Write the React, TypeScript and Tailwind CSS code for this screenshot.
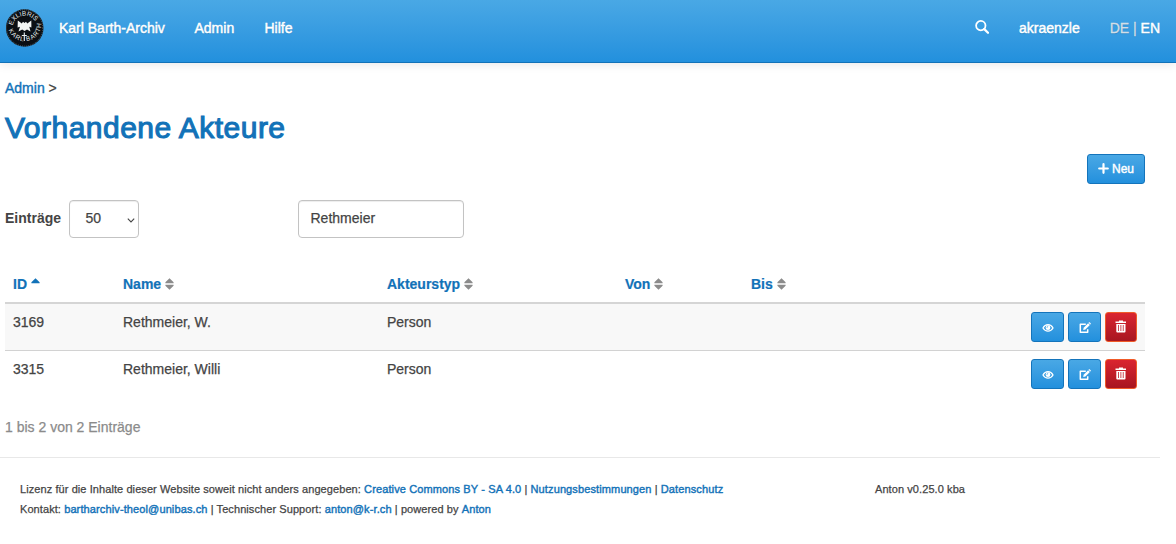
import React from "react";

const blueButton =
  "flex h-[30px] items-center justify-center rounded-[3px] border border-[#1474bb] bg-linear-to-b from-[#49a8e5] to-[#2290dd] text-white";

function Logo() {
  return (
    <svg width="38" height="39" viewBox="0 0 38 39" className="block" aria-label="Ex Libris Karl Barth">
      <circle cx="18.7" cy="19" r="18.8" fill="#0b0f14" />
      <circle cx="18.7" cy="19" r="18.1" fill="none" stroke="#8fa3ae" strokeWidth="0.5" strokeDasharray="1 1" />
      <defs>
        <path id="topArc" d="M6.600 16.900 A12.300 12.300 0 0 1 30.300 14.800" />
        <path id="bottomArc" d="M1.900 18 A16.800 16.800 0 0 0 35.300 16" />
      </defs>
      <g fill="#e8eef0" fontFamily="Liberation Sans, sans-serif">
        <text fontSize="6.4">
          <textPath href="#topArc" startOffset="0.5" textLength="29">EXLIBRIS</textPath>
        </text>
        <text fontSize="6.4">
          <textPath href="#bottomArc" startOffset="3" textLength="48">KARL BARTH</textPath>
        </text>
      </g>
      <path
        d="M11.800 11.500 L15.800 14.500 L17 12.700 L18.500 14 L20 12.700 L21.3 14.500 L25.300 11.500 L25.400 18.500 L23.3 17.8 L24.500 22.500 L21 20.500 L18.6 22 L16.2 20.500 L12.500 22.500 L14 17.8 L11.6 18.500 Z"
        fill="#f2f5f5"
      />
      <path d="M18.3 23.500 V32 M15.800 26.500 H20.800" stroke="#e8eef0" strokeWidth="1.100" />
    </svg>
  );
}

function SearchIcon() {
  return (
    <svg width="14" height="14" viewBox="0 0 14 14" fill="none" stroke="white">
      <circle cx="5.8" cy="5.6" r="4.7" strokeWidth="1.8" />
      <path d="M9.3 9.1 L13 12.7" strokeWidth="2.3" strokeLinecap="round" />
    </svg>
  );
}

function EyeIcon() {
  return (
    <svg width="12" height="10" viewBox="0 0 12 10" fill="none" stroke="white" className="mt-px">
      <path d="M1 5 C3.300 0.600 8.700 0.600 11 5 C8.700 9.200 3.300 9.200 1 5Z" strokeWidth="1.300" />
      <circle cx="6" cy="4.700" r="2.400" fill="white" stroke="none" />
      <path d="M4.900 4.800 A1.200 1.200 0 0 1 6.100 3.500" stroke="#3a9de0" strokeWidth="0.700" />
    </svg>
  );
}

function EditIcon() {
  return (
    <svg width="12" height="12" viewBox="0 0 12 12" fill="none" stroke="white" className="mt-px">
      <path d="M6.800 2.200 H1.300 V10.300 H8.700 V7.200" strokeWidth="1.500" strokeLinejoin="round" />
      <path d="M4.200 7.900 L4.600 5.700 L9.100 1.200 L10.900 3 L6.400 7.500Z" fill="white" stroke="none" />
      <path d="M9.500 0.800 L10 0.300 Q10.300 0 10.700 0.300 L11.800 1.400 Q12 1.800 11.800 2 L11.200 2.600Z" fill="white" stroke="none" />
    </svg>
  );
}

function TrashIcon() {
  return (
    <svg width="12" height="13" viewBox="0 0 12 13" fill="white" className="-mt-px">
      <path d="M4 0.500h4v1h3v1.500H0.500V1.500H4z" />
      <path fillRule="evenodd" d="M1.300 4h9.200v7.500a1 1 0 0 1-1 1H2.300a1 1 0 0 1-1-1zM3.200 5v6h.8V5zM5.500 5v6h.8V5zM7.800 5v6h.8V5z" />
    </svg>
  );
}

function SortIcon() {
  return (
    <svg width="9" height="12" viewBox="0 0 9 12" fill="#8b8b8b" className="ml-1 block">
      <path d="M4.500 0.300 L8.600 4.200 V5.200 H0.400 V4.200Z M4.500 11.700 L8.600 7.800 V6.800 H0.400 V7.800Z" />
    </svg>
  );
}

const columns = [
  { label: "ID", width: "w-[110px]" },
  { label: "Name", width: "w-[264px]" },
  { label: "Akteurstyp", width: "w-[238px]" },
  { label: "Von", width: "w-[126px]" },
  { label: "Bis", width: "w-[120px]" },
];

const rows = [
  { id: "3169", name: "Rethmeier, W.", type: "Person", style: "h-[47px] border-b border-[#d2d2d2] bg-[#f8f8f8]" },
  { id: "3315", name: "Rethmeier, Willi", type: "Person", style: "h-[47px]" },
];

const link = "text-[#1272b8] [-webkit-text-stroke:0.4px_#1272b8]";
const footerLink = link + " tracking-[0.12px]";

export default function App() {
  return (
    <div className="h-[544px] w-[1176px] overflow-hidden bg-white font-['Liberation_Sans',Arial,sans-serif] text-[14px] leading-5 text-[#444] [-webkit-text-stroke:0.25px]">
      <header className="flex h-[63px] items-start border-b border-[#1272b8] bg-linear-to-b from-[#49a8e5] to-[#2290dd] text-white shadow-[0_1px_10px_rgba(0,0,0,0.1)] [text-shadow:0_1px_1px_rgba(0,0,0,0.15)] [-webkit-text-stroke:0.45px]">
        <div className="ml-1.5 mt-[9px] w-[53px] [-webkit-text-stroke:0]"><Logo /></div>
        <nav className="mt-[18px] flex">
          <a className="w-[135.500px]">Karl Barth-Archiv</a>
          <a className="w-[70px]">Admin</a>
          <a>Hilfe</a>
        </nav>
        <div className="ml-auto mr-4 mt-[18px] flex">
          <span className="mr-[30px] mt-0.5"><SearchIcon /></span>
          <span className="mr-[30px]">akraenzle</span>
          <span><span className="text-[#d3dee6] [-webkit-text-stroke:0.3px]">DE | </span>EN</span>
        </div>
      </header>

      <main className="ml-[5px] w-[1140px]">
        <div className="pt-[15px]"><a className={link}>Admin</a> &gt;</div>
        <h1 className="mt-[13px] text-[30px] leading-[33px] tracking-[0.48px] text-[#1272b8] [-webkit-text-stroke:1.1px]">Vorhandene Akteure</h1>
        <div className="mt-[10px] flex justify-end">
          <button className={blueButton + " w-[58px] gap-[3px] pb-px text-[12px] [-webkit-text-stroke:0.4px]"}>
            <svg width="11" height="11" viewBox="0 0 11 11" stroke="white" strokeWidth="2.200" strokeLinecap="round"><path d="M5.500 1.200v8.600M1.200 5.500h8.600" /></svg>
            Neu
          </button>
        </div>
        <div className="mt-4 flex">
          <label className="w-[64px] pt-2 font-bold [-webkit-text-stroke:0]">Einträge</label>
          <div className="flex h-[38px] w-[70px] items-center justify-between rounded border border-[#c3c3c3] pb-0.5 pl-[15.500px] pr-[3.500px] shadow-[inset_0_1px_1px_rgba(0,0,0,0.075)]">
            50
            <svg width="8" height="5" viewBox="0 0 8 5" fill="none" stroke="#444" strokeWidth="1.100" className="mt-1"><path d="M0.800 0.700 L4 3.900 L7.200 0.700" /></svg>
          </div>
          <div className="ml-[159px] flex h-[38px] w-[166px] items-center rounded border border-[#c3c3c3] pb-0.5 pl-[11.500px] shadow-[inset_0_1px_1px_rgba(0,0,0,0.075)]">Rethmeier</div>
        </div>

        <div className="mt-7 flex h-[38px] items-center border-b-2 border-[#d5d5d5] pl-2 font-bold text-[#1272b8] [-webkit-text-stroke:0.2px]">
          {columns.map((c, i) => (
            <div key={c.label} className={"flex items-center " + c.width}>
              {c.label}
              {i === 0 ? (
                <svg width="9" height="12" viewBox="0 0 9 12" fill="#1272b8" className="ml-1"><path d="M4.500 0.300 L8.600 4.200 V5.200 H0.400 V4.200Z" /></svg>
              ) : <SortIcon />}
            </div>
          ))}
        </div>
        {rows.map((r) => (
          <div key={r.id} className={"flex pl-2 pr-2 pt-2 " + r.style}>
            <div className="w-[110px]">{r.id}</div>
            <div className="w-[264px]">{r.name}</div>
            <div className="w-[238px]">{r.type}</div>
            <div className="ml-auto flex gap-1">
              <button className={blueButton + " w-[33px]"}><EyeIcon /></button>
              <button className={blueButton + " w-[33px]"}><EditIcon /></button>
              <button className="flex h-[30px] w-8 items-center justify-center rounded-[3px] border border-[#f05a28] bg-linear-to-b from-[#da2430] to-[#a81620]"><TrashIcon /></button>
            </div>
          </div>
        ))}
        <div className="mt-[19px] text-[#8b8b8b]">1 bis 2 von 2 Einträge</div>
      </main>

      <footer className="mt-5 flex w-[1160px] border-t border-[#e8e8e8] pl-5 pt-[21px] text-[11px] tracking-[0.08px]">
        <div className="w-[855px]">
          <p>Lizenz für die Inhalte dieser Website soweit nicht anders angegeben: <a className={footerLink}>Creative Commons BY - SA 4.0</a> | <a className={footerLink}>Nutzungsbestimmungen</a> | <a className={footerLink}>Datenschutz</a></p>
          <p>Kontakt: <a className={footerLink}>bartharchiv-theol@unibas.ch</a> | Technischer Support: <a className={footerLink}>anton@k-r.ch</a> | powered by <a className={footerLink}>Anton</a></p>
        </div>
        <div>Anton v0.25.0 kba</div>
      </footer>
    </div>
  );
}
